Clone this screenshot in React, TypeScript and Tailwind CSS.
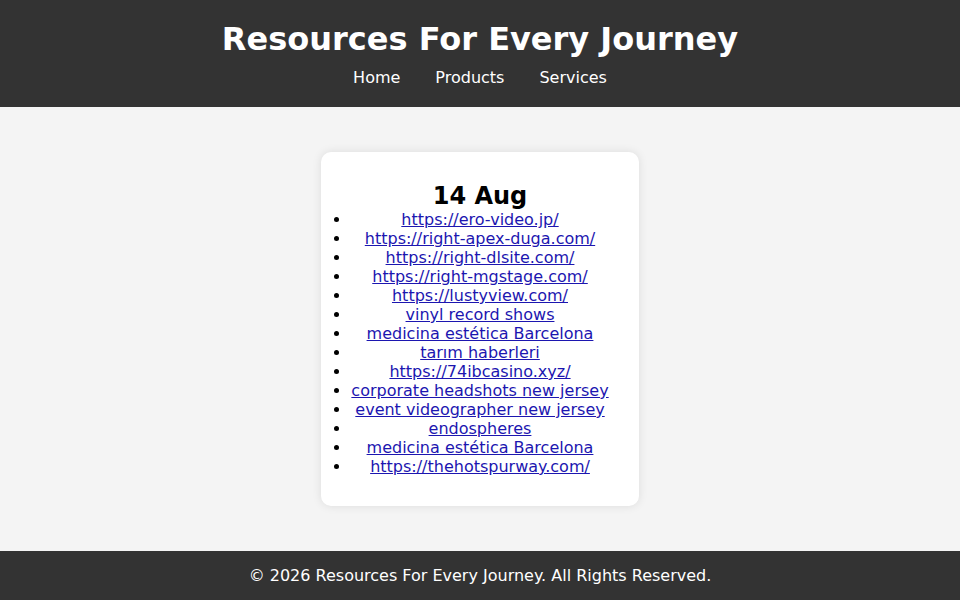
const links = [
  { label: 'https://ero-video.jp/', href: '#' },
  { label: 'https://right-apex-duga.com/', href: '#' },
  { label: 'https://right-dlsite.com/', href: '#' },
  { label: 'https://right-mgstage.com/', href: '#' },
  { label: 'https://lustyview.com/', href: '#' },
  { label: 'vinyl record shows', href: '#' },
  { label: 'medicina estética Barcelona', href: '#' },
  { label: 'tarım haberleri', href: '#' },
  { label: 'https://74ibcasino.xyz/', href: '#' },
  { label: 'corporate headshots new jersey', href: '#' },
  { label: 'event videographer new jersey', href: '#' },
  { label: 'endospheres', href: '#' },
  { label: 'medicina estética Barcelona', href: '#' },
  { label: 'https://thehotspurway.com/', href: '#' },
];

export default function App() {
  return (
    <div className="flex h-screen flex-col bg-[#f4f4f4] font-['DejaVu_Sans',sans-serif] text-base">
      {/* Site header */}
      <header className="bg-[#333333] pt-[21px] pb-[20px] text-center text-white">
        <h1 className="text-[32px] font-bold leading-[37px]">Resources For Every Journey</h1>
        <nav className="mt-[10px] flex justify-center gap-[35px] leading-[19px]">
          <a href="#" className="text-white">Home</a>
          <a href="#" className="text-white">Products</a>
          <a href="#" className="text-white">Services</a>
        </nav>
      </header>

      {/* Main content */}
      <main className="flex flex-1 items-center justify-center">
        <div className="rounded-[10px] bg-white p-[30px] text-center shadow-[0_0_10px_rgba(0,0,0,0.1)]">
          <h2 className="text-2xl font-bold leading-[28px] text-black">14 Aug</h2>
          <ul className="list-disc leading-[19px]">
            {links.map((l, i) => (
              <li key={i}>
                <a href={l.href} className="text-[#1c16b0] underline">
                  {l.label}
                </a>
              </li>
            ))}
          </ul>
        </div>
      </main>

      {/* Footer */}
      <footer className="flex h-[49px] items-center justify-center bg-[#333333] text-white">
        <p>© 2026 Resources For Every Journey. All Rights Reserved.</p>
      </footer>
    </div>
  );
}
